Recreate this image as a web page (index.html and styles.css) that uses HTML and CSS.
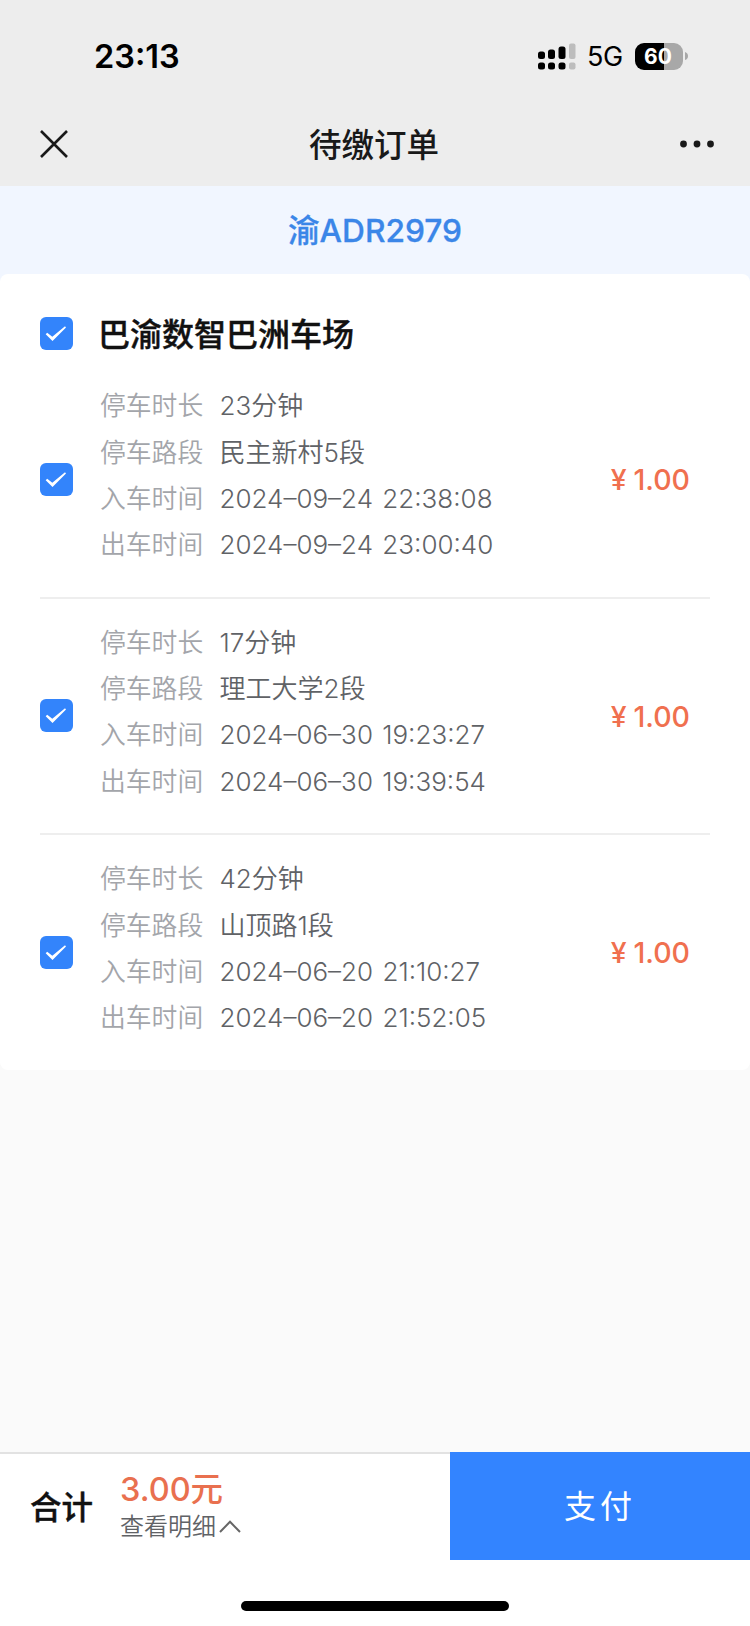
FILE: index.html
```html
<!DOCTYPE html>
<html lang="zh-CN">
<head>
    <meta charset="UTF-8">
    <meta name="viewport" content="width=device-width, initial-scale=1.0">
    <title>待缴订单</title>
    <link rel="stylesheet" href="styles.css">
</head>
<body>

    <svg class="symbols" width="0" height="0">
        <symbol id="check" viewBox="0 0 33 33">
            <path d="M5.7 17.2 L7.2 15.7 L12.3 19.8 L25 9.3 L26 10.4 L12.5 24 Z" fill="#fff"/>
        </symbol>
    </svg>

    <header>
        <div class="status-bar">
            <span class="time">23:13</span>
            <div class="status-icons">
                <svg class="signal" width="38" height="27" viewBox="0 0 38 27">
                    <rect x="0" y="8.5" width="7" height="7.5" rx="2.5"/>
                    <rect x="10" y="6.5" width="7" height="9.5" rx="2.5"/>
                    <rect x="20.5" y="3.5" width="7" height="12.5" rx="2.5"/>
                    <rect x="31" y="0.5" width="6.5" height="15.5" rx="2" fill="#bdbdbd"/>
                    <rect x="0" y="19.5" width="7" height="7" rx="2.5"/>
                    <rect x="10" y="19.5" width="7" height="7" rx="2.5"/>
                    <rect x="20.5" y="19.5" width="7" height="7" rx="2.5"/>
                    <rect x="31" y="19.5" width="6.5" height="7" rx="2" fill="#bdbdbd"/>
                </svg>
                <span class="network">5G</span>
                <div class="battery"><span>60</span></div>
                <svg class="battery-tip" width="3" height="8" viewBox="0 0 3 8"><path d="M0 0 Q3 1 3 4 Q3 7 0 8 Z" fill="#a8a8a8"/></svg>
            </div>
        </div>
        <div class="nav-bar">
            <svg class="close" width="28" height="28" viewBox="0 0 28 28"><path d="M1 1 L27 27 M27 1 L1 27" stroke="#191919" stroke-width="2.6"/></svg>
            <h1>待缴订单</h1>
            <svg class="more" width="34" height="8" viewBox="0 0 34 8"><circle cx="3.5" cy="4" r="3.4"/><circle cx="17" cy="4" r="3.4"/><circle cx="30.5" cy="4" r="3.4"/></svg>
        </div>
    </header>

    <main>
        <div class="plate">渝ADR2979</div>

        <section class="card">
            <div class="park">
                <svg class="checkbox"><use href="#check"/></svg>
                <h2>巴渝数智巴洲车场</h2>
            </div>

            <div class="order">
                <svg class="checkbox"><use href="#check"/></svg>
                <dl>
                    <dt>停车时长</dt><dd>23分钟</dd>
                    <dt>停车路段</dt><dd>民主新村5段</dd>
                    <dt>入车时间</dt><dd>2024–09–24 22:38:08</dd>
                    <dt>出车时间</dt><dd>2024–09–24 23:00:40</dd>
                </dl>
                <div class="price"><i>¥</i>1.00</div>
            </div>

            <div class="order">
                <svg class="checkbox"><use href="#check"/></svg>
                <dl>
                    <dt>停车时长</dt><dd>17分钟</dd>
                    <dt>停车路段</dt><dd>理工大学2段</dd>
                    <dt>入车时间</dt><dd>2024–06–30 19:23:27</dd>
                    <dt>出车时间</dt><dd>2024–06–30 19:39:54</dd>
                </dl>
                <div class="price"><i>¥</i>1.00</div>
            </div>

            <div class="order">
                <svg class="checkbox"><use href="#check"/></svg>
                <dl>
                    <dt>停车时长</dt><dd>42分钟</dd>
                    <dt>停车路段</dt><dd>山顶路1段</dd>
                    <dt>入车时间</dt><dd>2024–06–20 21:10:27</dd>
                    <dt>出车时间</dt><dd>2024–06–20 21:52:05</dd>
                </dl>
                <div class="price"><i>¥</i>1.00</div>
            </div>
        </section>
    </main>

    <footer>
        <div class="pay-bar">
            <div class="total">
                <strong>合计</strong>
                <div class="amount">
                    <div class="sum">3.00元</div>
                    <div class="detail">查看明细<svg width="22" height="13" viewBox="0 0 22 13"><path d="M1 12 L11 1.8 L21 12" fill="none" stroke="#666" stroke-width="2"/></svg></div>
                </div>
            </div>
            <button class="pay">支付</button>
        </div>
        <div class="home-indicator"></div>
    </footer>

</body>
</html>
```
FILE: styles.css
```css
* { margin: 0; padding: 0; box-sizing: border-box; }
body { height: 1626px; display: flex; flex-direction: column; background: #fafafa; font-family: Inter, "Noto Sans CJK SC", sans-serif; color: #111; overflow: hidden; }
.symbols { position: absolute; }

header { height: 186px; background: #ededed; flex: none; }
.status-bar { height: 102px; padding: 10px 62px 0 94px; display: flex; align-items: center; justify-content: space-between; color: #000; }
.time { padding-top: 2px; font-size: 32.5px; font-weight: 600; line-height: 40px; }
.status-icons { display: flex; align-items: center; }
.network { margin: 2px 0 0 11px; width: 37px; font-size: 27px; line-height: 30px; letter-spacing: -0.5px; }
.battery { width: 48px; height: 27px; margin-left: 11px; border-radius: 9px; background: linear-gradient(to right, #000 60%, #a8a8a8 60%); color: #fff; font-size: 21px; font-weight: 700; line-height: 27px; text-align: center; }
.battery span { padding-right: 2px; }
.battery-tip { margin-left: 2px; }
.nav-bar { height: 84px; padding: 0 36px 0 40px; display: flex; align-items: center; justify-content: space-between; }
.nav-bar h1 { padding-bottom: 4px; font-size: 32.5px; font-weight: 500; color: #191919; }
.nav-bar .more { fill: #191919; }

main { flex: 1; }
.plate { height: 100px; margin-bottom: -12px; padding-bottom: 12px; background: #f1f6ff; color: #3b86e8; font-size: 31.7px; font-weight: 500; line-height: 90px; text-align: center; -webkit-text-stroke: 0.3px; }
.card { position: relative; height: 796px; background: #fff; border-radius: 8px; padding: 0 40px; }
.checkbox { width: 33px; height: 33px; flex: none; border-radius: 6px; background: #3384fb; }
.park { height: 88px; padding-top: 31px; display: flex; align-items: center; gap: 25px; }
.park h2 { font-size: 32px; font-weight: 500; line-height: 40px; padding-top: 2px; -webkit-text-stroke: 0.4px; }
.order { height: 236.5px; display: flex; align-items: center; border-bottom: 2px solid #eee; }
.order:last-child { border-bottom-color: transparent; }
.order dl { margin-left: 27px; display: grid; grid-template-columns: 119.5px auto; grid-auto-rows: 36px; row-gap: 10.2px; padding-bottom: 7px; font-size: 25.8px; font-weight: 350; line-height: 36px; white-space: nowrap; }
.order dt { color: #a3a5aa; }
.order dd { color: #606266; font-size: 26px; word-spacing: 2px; }
.price { margin-left: auto; padding: 1px 20px 0 0; display: flex; color: #f0704f; font-size: 28.5px; font-weight: 500; }
.price i { font-style: normal; margin-right: 7px; }

footer { height: 174px; background: #fff; flex: none; }
.pay-bar { height: 108px; display: flex; }
.total { flex: 1; padding-left: 30px; display: flex; align-items: center; gap: 27px; border-top: 2px solid #e2e2e2; }
.total strong { padding-bottom: 5px; font-size: 31.5px; font-weight: 500; -webkit-text-stroke: 0.4px; }
.sum { padding-top: 1px; color: #e9704f; font-size: 32.5px; font-weight: 500; line-height: 38px; }
.detail { display: flex; align-items: center; gap: 3px; color: #606266; font-size: 24px; font-weight: 350; line-height: 36px; }
.pay { width: 300px; padding-bottom: 5px; border: none; background: #3384ff; color: #fff; font-family: inherit; font-size: 32px; font-weight: 400; letter-spacing: 4px; cursor: pointer; }
.home-indicator { width: 268px; height: 10px; margin: 41px auto 0; border-radius: 5px; background: #000; }
```
